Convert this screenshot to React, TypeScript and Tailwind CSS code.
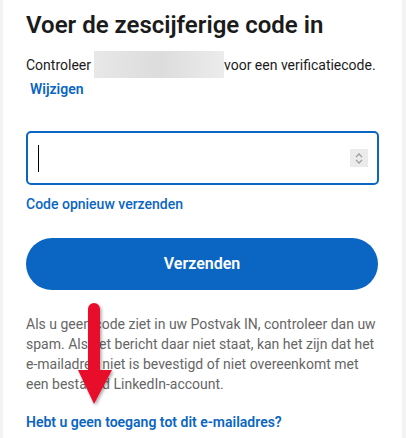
const font = { fontFamily: 'Roboto, "Liberation Sans", Arial, sans-serif' };

const App = () => {
  return (
    <div className="w-[406px] h-[438px] bg-[#f3f3f3] flex overflow-hidden relative" style={font}>
      <div className="ml-[3px] w-[399px] h-full bg-white px-[23px] pt-[9px]">
        {/* Heading */}
        <h1 className="text-[24px] leading-[32px] font-semibold text-[#1b1b1b]">
          Voer de zescijferige code in
        </h1>

        {/* Email line */}
        <div className="mt-[10px] flex items-center text-[14px] leading-[20px] text-[#1b1b1b]">
          <span>Controleer</span>
          <span className="ml-[3px] w-[130px] h-[27px] bg-gradient-to-r from-[#e8e8e8] via-[#dcdcdc] to-[#ececec]" />
          <span>voor een verificatiecode.</span>
        </div>
        <a className="block ml-[4px] mt-[1px] text-[14px] leading-[20px] font-semibold text-[#0a66c2]">Wijzigen</a>

        {/* Code input */}
        <div className="mt-[32px] h-[54px] border-2 border-[#0a66c2] rounded-[5px] flex items-center justify-between pl-[10px] pr-[9px]">
          <span className="w-[1px] h-[27px] bg-black" />
          <span className="w-[18px] h-[18px] bg-[#ebebeb] flex flex-col items-center justify-center gap-[1px]">
            <svg width="8" height="5" viewBox="0 0 8 5">
              <path d="M1 4.2 L4 1 L7 4.2" stroke="#9a9a9a" strokeWidth="1.2" fill="none" />
            </svg>
            <svg width="8" height="5" viewBox="0 0 8 5">
              <path d="M1 0.8 L4 4 L7 0.8" stroke="#9a9a9a" strokeWidth="1.2" fill="none" />
            </svg>
          </span>
        </div>

        <a className="block mt-[9px] text-[14px] leading-[20px] font-medium text-[#0a66c2]">Code opnieuw verzenden</a>

        {/* Submit */}
        <button className="mt-[24px] w-[352px] h-[52px] rounded-full bg-[#0a66c2] text-white text-[16px] font-semibold">
          Verzenden
        </button>

        <p className="mt-[24px] pr-[2px] text-[14px] leading-[20px] text-[#666666]">
          Als u geen code ziet in uw Postvak IN, controleer dan uw spam. Als het bericht daar niet staat, kan het zijn dat het e-mailadres niet is bevestigd of niet overeenkomt met een bestaand LinkedIn-account.
        </p>

        <a className="block mt-[18px] text-[14px] leading-[20px] font-semibold text-[#0a66c2]">
          Hebt u geen toegang tot dit e-mailadres?
        </a>
      </div>

      {/* Red annotation arrow */}
      <svg className="absolute left-[74px] top-[300px]" width="44" height="110" viewBox="0 0 44 110">
        <defs>
          <filter id="sh" x="-30%" y="-10%" width="160%" height="130%">
            <feDropShadow dx="1.5" dy="1.5" stdDeviation="1.5" floodColor="#000" floodOpacity="0.35" />
          </filter>
        </defs>
        <g filter="url(#sh)">
          <path d="M14 9 a6 6 0 0 1 12 0 V70 H38 L20 104 L4 70 H14 Z" fill="#e8102a" />
        </g>
      </svg>
    </div>
  );
};

export default App;
